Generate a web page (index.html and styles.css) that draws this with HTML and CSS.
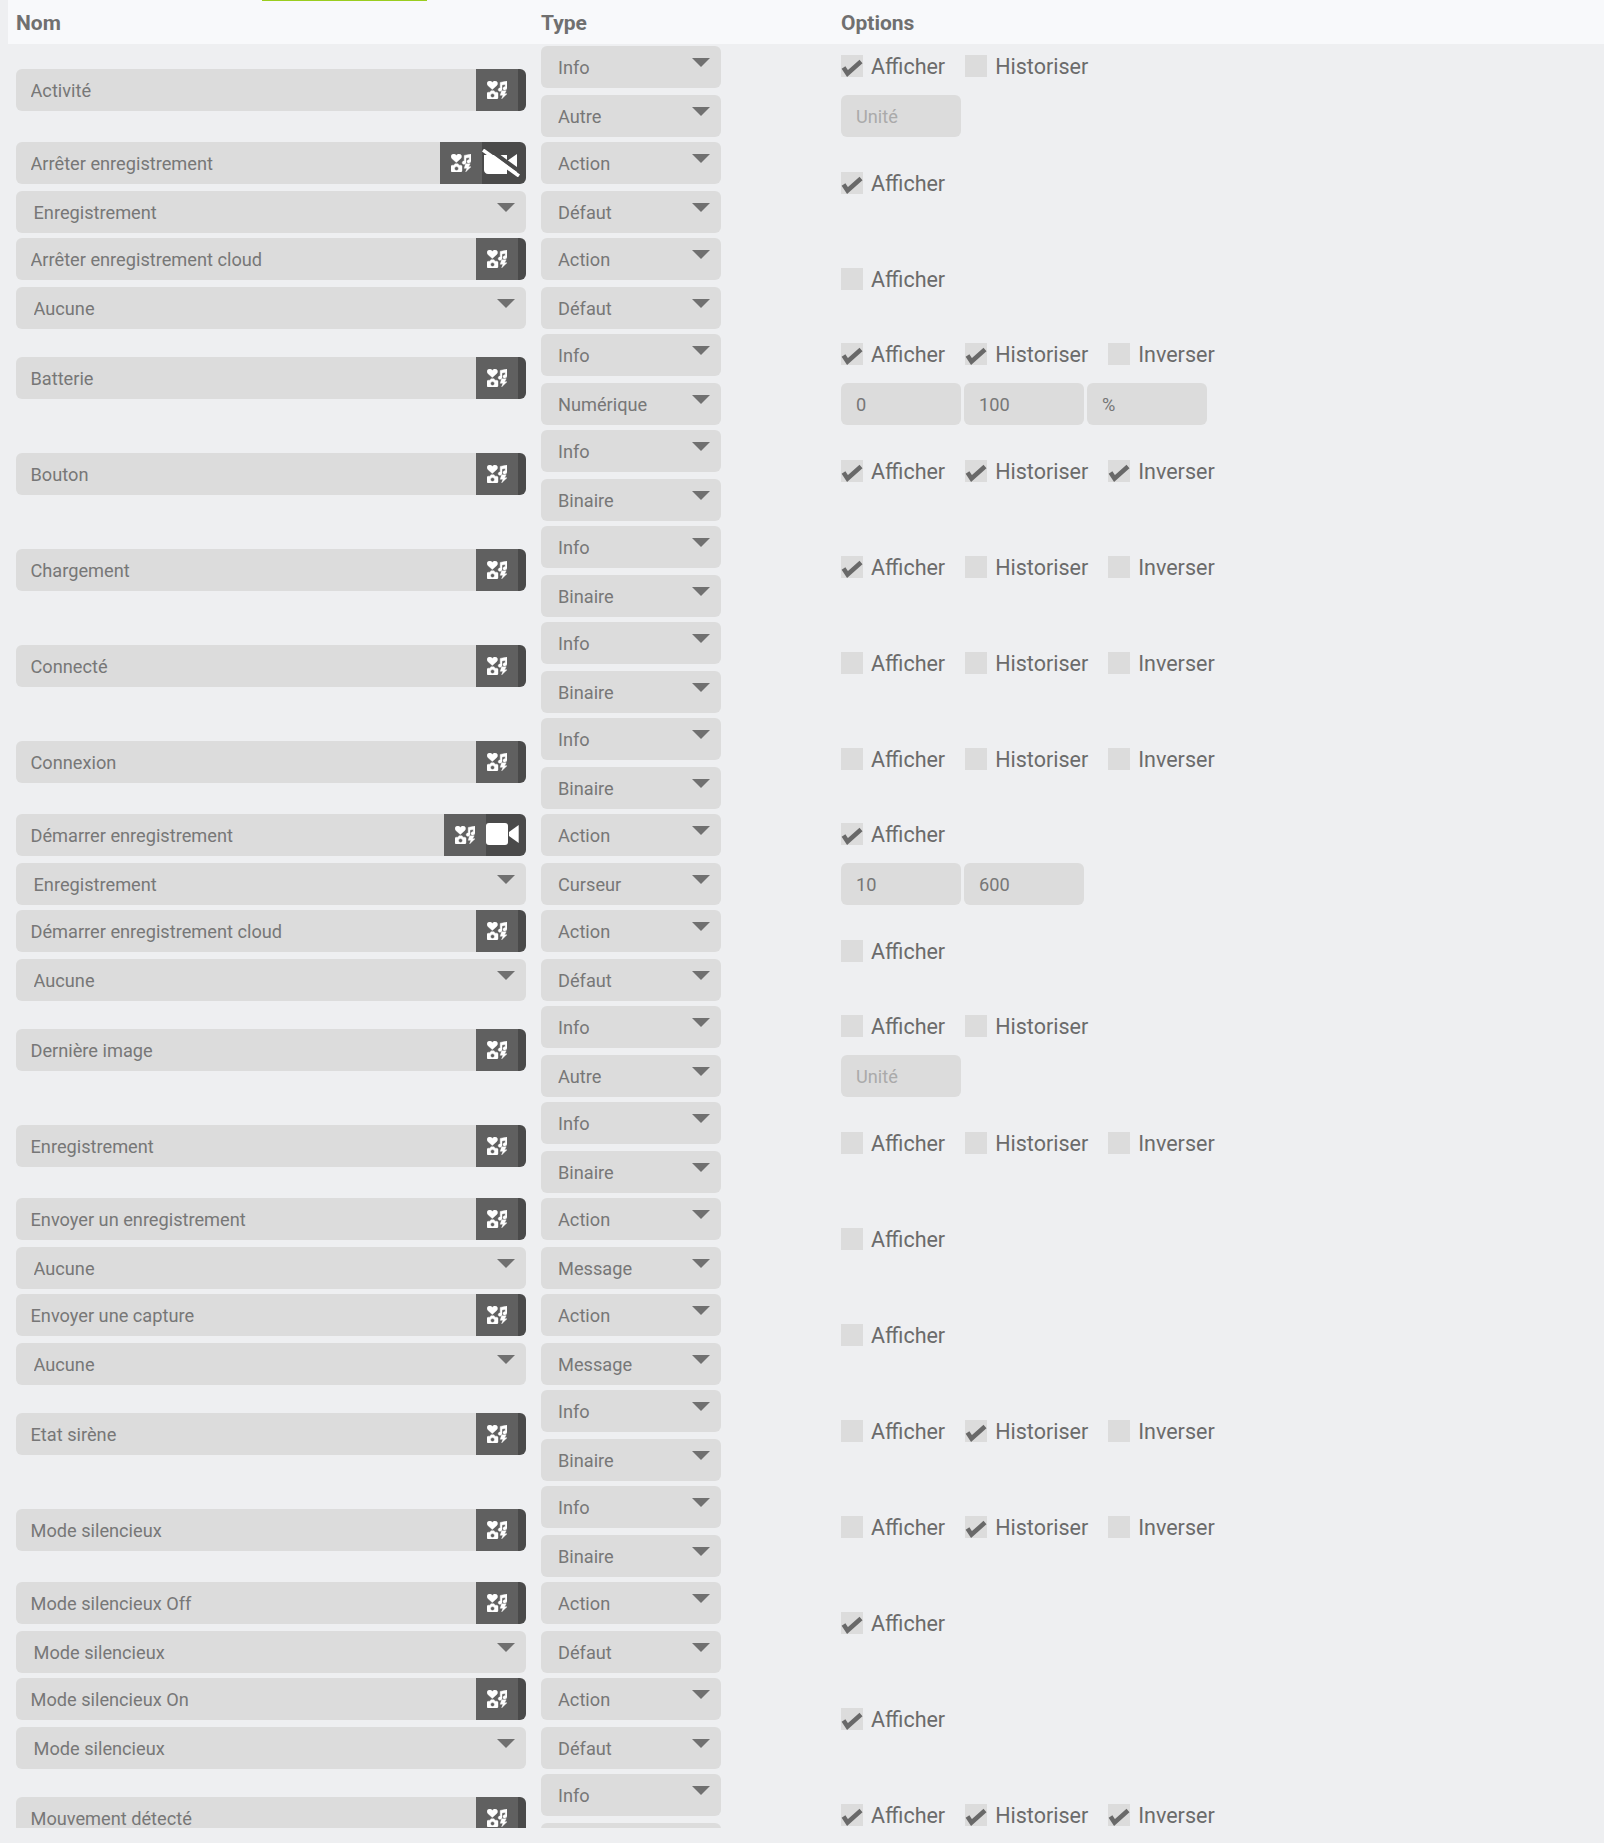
FILE: index.html
```html
<!DOCTYPE html>
<html lang="fr">
<head>
    <meta charset="UTF-8">
    <title>Commandes</title>
    <link rel="stylesheet" href="styles.css">
</head>
<body>

    <svg class="sprites" width="0" height="0">
        <symbol id="icon-generic" viewBox="0 0 20 18">
            <path d="M5.3 8.6 0.8 4.4C-0.7 2.9 0.1 0 2.6 0 3.8 0 4.7 0.6 5.3 1.4 5.9 0.6 6.8 0 8 0 10.5 0 11.3 2.9 9.8 4.4Z"/>
            <path d="M13.2 1.4 20 0V7C20 8.3 18.9 9 17.8 9 16.8 9 16 8.3 16 7.4 16 6.4 16.9 5.7 17.9 5.7L18.2 5.7V3.4L15 4.1V8.4C15 9.6 13.9 10.2 12.9 10.2 11.9 10.2 11.2 9.6 11.2 8.7 11.2 7.8 12 7.1 13 7.1L13.2 7.1Z"/>
            <path fill-rule="evenodd" d="M1.3 11.2H3L3.9 9.8H7.1L8 11.2H9.7C10.4 11.2 11 11.8 11 12.5V16.7C11 17.4 10.4 18 9.7 18H1.3C0.6 18 0 17.4 0 16.7V12.5C0 11.8 0.6 11.2 1.3 11.2ZM5.5 12.6A2 2 0 1 0 5.5 16.6 2 2 0 1 0 5.5 12.6Z"/>
            <path d="M14.6 9.8H19.2L17.6 12.8H20L14.6 18 15.9 14.3H13.2Z"/>
        </symbol>
        <symbol id="icon-video" viewBox="0 0 33 22">
            <rect x="0" y="0" width="22" height="22" rx="3"/>
            <path d="M23 9 32.7 2V20L23 13Z"/>
        </symbol>
        <symbol id="icon-video-off" viewBox="0 0 38 28">
            <path d="M2 6H25V25H6C3.8 25 2 23.2 2 21Z"/>
            <path d="M25 12 35 5V25L25 18Z"/>
            <path class="slash-bg" d="M3 -3 41 25"/>
            <path class="slash" d="M1 1 37 27"/>
        </symbol>
    </svg>

    <div class="panel">
        <div class="table-head">
            <div>Nom</div>
            <div>Type</div>
            <div>Options</div>
        </div>

        <!-- Commandes info : nom centre sur les deux selects -->
        <div class="cmd">
            <div class="cmd-name">
                <div class="name-group"><input type="text" value="Activité"><button class="btn-generic"><svg><use href="#icon-generic"/></svg></button><button class="btn-end"></button></div>
            </div>
            <div class="cmd-type">
                <div class="select-wrap"><select><option>Info</option></select></div>
                <div class="select-wrap"><select><option>Autre</option></select></div>
            </div>
            <div class="cmd-options">
                <div class="checks">
                    <label><input type="checkbox" checked>Afficher</label>
                    <label><input type="checkbox">Historiser</label>
                </div>
                <div class="fields"><input type="text" placeholder="Unité"></div>
            </div>
        </div>

        <div class="cmd">
            <div class="cmd-name">
                <div class="name-group"><input type="text" value="Arrêter enregistrement"><button class="btn-generic"><svg><use href="#icon-generic"/></svg></button><button class="btn-icon off"><svg><use href="#icon-video-off"/></svg></button></div>
                <div class="select-wrap select-link"><select><option>Enregistrement</option></select></div>
            </div>
            <div class="cmd-type">
                <div class="select-wrap"><select><option>Action</option></select></div>
                <div class="select-wrap"><select><option>Défaut</option></select></div>
            </div>
            <div class="cmd-options">
                <div class="checks">
                    <label><input type="checkbox" checked>Afficher</label>
                </div>
            </div>
        </div>

        <div class="cmd">
            <div class="cmd-name">
                <div class="name-group"><input type="text" value="Arrêter enregistrement cloud"><button class="btn-generic"><svg><use href="#icon-generic"/></svg></button><button class="btn-end"></button></div>
                <div class="select-wrap select-link"><select><option>Aucune</option></select></div>
            </div>
            <div class="cmd-type">
                <div class="select-wrap"><select><option>Action</option></select></div>
                <div class="select-wrap"><select><option>Défaut</option></select></div>
            </div>
            <div class="cmd-options">
                <div class="checks">
                    <label><input type="checkbox">Afficher</label>
                </div>
            </div>
        </div>

        <div class="cmd">
            <div class="cmd-name">
                <div class="name-group"><input type="text" value="Batterie"><button class="btn-generic"><svg><use href="#icon-generic"/></svg></button><button class="btn-end"></button></div>
            </div>
            <div class="cmd-type">
                <div class="select-wrap"><select><option>Info</option></select></div>
                <div class="select-wrap"><select><option>Numérique</option></select></div>
            </div>
            <div class="cmd-options">
                <div class="checks">
                    <label><input type="checkbox" checked>Afficher</label>
                    <label><input type="checkbox" checked>Historiser</label>
                    <label><input type="checkbox">Inverser</label>
                </div>
                <div class="fields"><input type="text" value="0"><input type="text" value="100"><input type="text" value="%"></div>
            </div>
        </div>

        <div class="cmd">
            <div class="cmd-name">
                <div class="name-group"><input type="text" value="Bouton"><button class="btn-generic"><svg><use href="#icon-generic"/></svg></button><button class="btn-end"></button></div>
            </div>
            <div class="cmd-type">
                <div class="select-wrap"><select><option>Info</option></select></div>
                <div class="select-wrap"><select><option>Binaire</option></select></div>
            </div>
            <div class="cmd-options">
                <div class="checks">
                    <label><input type="checkbox" checked>Afficher</label>
                    <label><input type="checkbox" checked>Historiser</label>
                    <label><input type="checkbox" checked>Inverser</label>
                </div>
            </div>
        </div>

        <div class="cmd">
            <div class="cmd-name">
                <div class="name-group"><input type="text" value="Chargement"><button class="btn-generic"><svg><use href="#icon-generic"/></svg></button><button class="btn-end"></button></div>
            </div>
            <div class="cmd-type">
                <div class="select-wrap"><select><option>Info</option></select></div>
                <div class="select-wrap"><select><option>Binaire</option></select></div>
            </div>
            <div class="cmd-options">
                <div class="checks">
                    <label><input type="checkbox" checked>Afficher</label>
                    <label><input type="checkbox">Historiser</label>
                    <label><input type="checkbox">Inverser</label>
                </div>
            </div>
        </div>

        <div class="cmd">
            <div class="cmd-name">
                <div class="name-group"><input type="text" value="Connecté"><button class="btn-generic"><svg><use href="#icon-generic"/></svg></button><button class="btn-end"></button></div>
            </div>
            <div class="cmd-type">
                <div class="select-wrap"><select><option>Info</option></select></div>
                <div class="select-wrap"><select><option>Binaire</option></select></div>
            </div>
            <div class="cmd-options">
                <div class="checks">
                    <label><input type="checkbox">Afficher</label>
                    <label><input type="checkbox">Historiser</label>
                    <label><input type="checkbox">Inverser</label>
                </div>
            </div>
        </div>

        <div class="cmd">
            <div class="cmd-name">
                <div class="name-group"><input type="text" value="Connexion"><button class="btn-generic"><svg><use href="#icon-generic"/></svg></button><button class="btn-end"></button></div>
            </div>
            <div class="cmd-type">
                <div class="select-wrap"><select><option>Info</option></select></div>
                <div class="select-wrap"><select><option>Binaire</option></select></div>
            </div>
            <div class="cmd-options">
                <div class="checks">
                    <label><input type="checkbox">Afficher</label>
                    <label><input type="checkbox">Historiser</label>
                    <label><input type="checkbox">Inverser</label>
                </div>
            </div>
        </div>

        <div class="cmd">
            <div class="cmd-name">
                <div class="name-group"><input type="text" value="Démarrer enregistrement"><button class="btn-generic"><svg><use href="#icon-generic"/></svg></button><button class="btn-icon on"><svg><use href="#icon-video"/></svg></button></div>
                <div class="select-wrap select-link"><select><option>Enregistrement</option></select></div>
            </div>
            <div class="cmd-type">
                <div class="select-wrap"><select><option>Action</option></select></div>
                <div class="select-wrap"><select><option>Curseur</option></select></div>
            </div>
            <div class="cmd-options">
                <div class="checks">
                    <label><input type="checkbox" checked>Afficher</label>
                </div>
                <div class="fields"><input type="text" value="10"><input type="text" value="600"></div>
            </div>
        </div>

        <div class="cmd">
            <div class="cmd-name">
                <div class="name-group"><input type="text" value="Démarrer enregistrement cloud"><button class="btn-generic"><svg><use href="#icon-generic"/></svg></button><button class="btn-end"></button></div>
                <div class="select-wrap select-link"><select><option>Aucune</option></select></div>
            </div>
            <div class="cmd-type">
                <div class="select-wrap"><select><option>Action</option></select></div>
                <div class="select-wrap"><select><option>Défaut</option></select></div>
            </div>
            <div class="cmd-options">
                <div class="checks">
                    <label><input type="checkbox">Afficher</label>
                </div>
            </div>
        </div>

        <div class="cmd">
            <div class="cmd-name">
                <div class="name-group"><input type="text" value="Dernière image"><button class="btn-generic"><svg><use href="#icon-generic"/></svg></button><button class="btn-end"></button></div>
            </div>
            <div class="cmd-type">
                <div class="select-wrap"><select><option>Info</option></select></div>
                <div class="select-wrap"><select><option>Autre</option></select></div>
            </div>
            <div class="cmd-options">
                <div class="checks">
                    <label><input type="checkbox">Afficher</label>
                    <label><input type="checkbox">Historiser</label>
                </div>
                <div class="fields"><input type="text" placeholder="Unité"></div>
            </div>
        </div>

        <div class="cmd">
            <div class="cmd-name">
                <div class="name-group"><input type="text" value="Enregistrement"><button class="btn-generic"><svg><use href="#icon-generic"/></svg></button><button class="btn-end"></button></div>
            </div>
            <div class="cmd-type">
                <div class="select-wrap"><select><option>Info</option></select></div>
                <div class="select-wrap"><select><option>Binaire</option></select></div>
            </div>
            <div class="cmd-options">
                <div class="checks">
                    <label><input type="checkbox">Afficher</label>
                    <label><input type="checkbox">Historiser</label>
                    <label><input type="checkbox">Inverser</label>
                </div>
            </div>
        </div>

        <div class="cmd">
            <div class="cmd-name">
                <div class="name-group"><input type="text" value="Envoyer un enregistrement"><button class="btn-generic"><svg><use href="#icon-generic"/></svg></button><button class="btn-end"></button></div>
                <div class="select-wrap select-link"><select><option>Aucune</option></select></div>
            </div>
            <div class="cmd-type">
                <div class="select-wrap"><select><option>Action</option></select></div>
                <div class="select-wrap"><select><option>Message</option></select></div>
            </div>
            <div class="cmd-options">
                <div class="checks">
                    <label><input type="checkbox">Afficher</label>
                </div>
            </div>
        </div>

        <div class="cmd">
            <div class="cmd-name">
                <div class="name-group"><input type="text" value="Envoyer une capture"><button class="btn-generic"><svg><use href="#icon-generic"/></svg></button><button class="btn-end"></button></div>
                <div class="select-wrap select-link"><select><option>Aucune</option></select></div>
            </div>
            <div class="cmd-type">
                <div class="select-wrap"><select><option>Action</option></select></div>
                <div class="select-wrap"><select><option>Message</option></select></div>
            </div>
            <div class="cmd-options">
                <div class="checks">
                    <label><input type="checkbox">Afficher</label>
                </div>
            </div>
        </div>

        <div class="cmd">
            <div class="cmd-name">
                <div class="name-group"><input type="text" value="Etat sirène"><button class="btn-generic"><svg><use href="#icon-generic"/></svg></button><button class="btn-end"></button></div>
            </div>
            <div class="cmd-type">
                <div class="select-wrap"><select><option>Info</option></select></div>
                <div class="select-wrap"><select><option>Binaire</option></select></div>
            </div>
            <div class="cmd-options">
                <div class="checks">
                    <label><input type="checkbox">Afficher</label>
                    <label><input type="checkbox" checked>Historiser</label>
                    <label><input type="checkbox">Inverser</label>
                </div>
            </div>
        </div>

        <div class="cmd">
            <div class="cmd-name">
                <div class="name-group"><input type="text" value="Mode silencieux"><button class="btn-generic"><svg><use href="#icon-generic"/></svg></button><button class="btn-end"></button></div>
            </div>
            <div class="cmd-type">
                <div class="select-wrap"><select><option>Info</option></select></div>
                <div class="select-wrap"><select><option>Binaire</option></select></div>
            </div>
            <div class="cmd-options">
                <div class="checks">
                    <label><input type="checkbox">Afficher</label>
                    <label><input type="checkbox" checked>Historiser</label>
                    <label><input type="checkbox">Inverser</label>
                </div>
            </div>
        </div>

        <div class="cmd">
            <div class="cmd-name">
                <div class="name-group"><input type="text" value="Mode silencieux Off"><button class="btn-generic"><svg><use href="#icon-generic"/></svg></button><button class="btn-end"></button></div>
                <div class="select-wrap select-link"><select><option>Mode silencieux</option></select></div>
            </div>
            <div class="cmd-type">
                <div class="select-wrap"><select><option>Action</option></select></div>
                <div class="select-wrap"><select><option>Défaut</option></select></div>
            </div>
            <div class="cmd-options">
                <div class="checks">
                    <label><input type="checkbox" checked>Afficher</label>
                </div>
            </div>
        </div>

        <div class="cmd">
            <div class="cmd-name">
                <div class="name-group"><input type="text" value="Mode silencieux On"><button class="btn-generic"><svg><use href="#icon-generic"/></svg></button><button class="btn-end"></button></div>
                <div class="select-wrap select-link"><select><option>Mode silencieux</option></select></div>
            </div>
            <div class="cmd-type">
                <div class="select-wrap"><select><option>Action</option></select></div>
                <div class="select-wrap"><select><option>Défaut</option></select></div>
            </div>
            <div class="cmd-options">
                <div class="checks">
                    <label><input type="checkbox" checked>Afficher</label>
                </div>
            </div>
        </div>

        <div class="cmd">
            <div class="cmd-name">
                <div class="name-group"><input type="text" value="Mouvement détecté"><button class="btn-generic"><svg><use href="#icon-generic"/></svg></button><button class="btn-end"></button></div>
            </div>
            <div class="cmd-type">
                <div class="select-wrap"><select><option>Info</option></select></div>
                <div class="select-wrap"><select><option>Binaire</option></select></div>
            </div>
            <div class="cmd-options">
                <div class="checks">
                    <label><input type="checkbox" checked>Afficher</label>
                    <label><input type="checkbox" checked>Historiser</label>
                    <label><input type="checkbox" checked>Inverser</label>
                </div>
            </div>
        </div>
    </div>

</body>
</html>
```

FILE: styles.css
```css
html, body {
    margin: 0;
    height: 100%;
    overflow: hidden;
}

body {
    font-family: Roboto, "Liberation Sans", sans-serif;
    background-color: #eeeff1;
    color: #6f6f6f;
}

.sprites {
    position: absolute;
}

.panel {
    height: 1828px;
    margin-left: 8px;
    overflow: hidden;
}

.table-head, .cmd {
    display: grid;
    grid-template-columns: 510px 180px 1fr;
    column-gap: 15px;
    padding-left: 8px;
}

.table-head {
    position: relative;
    height: 44px;
    box-sizing: border-box;
    padding-top: 2px;
    margin-bottom: 2px;
    align-items: center;
    background-color: #f8f9fb;
    font-size: 21px;
    font-weight: 700;
    color: #707070;
}

/* bord vert de l'onglet actif au dessus */
.table-head::before {
    content: "";
    position: absolute;
    top: 0;
    left: 254px;
    width: 165px;
    height: 1px;
    background-color: #9acd1e;
}

.table-head div:last-child, .cmd-options {
    margin-left: 105px;
}

.cmd {
    height: 91px;
    margin-bottom: 5px;
}

.cmd-name, .cmd-type {
    display: flex;
    flex-direction: column;
    justify-content: center;
    gap: 7px;
}

input[type="text"], select {
    height: 42px;
    box-sizing: border-box;
    border: none;
    border-radius: 6px;
    outline: none;
    background-color: #dcdcdc;
    font-family: inherit;
    font-size: 18.2px;
    color: #777;
}

input::placeholder {
    color: #aaa;
}

.name-group {
    display: flex;
    height: 42px;
}

.name-group:only-child {
    margin-top: -3px;
}

.name-group input[type="text"] {
    flex: 1;
    min-width: 0;
    padding: 0 14.5px;
    border-radius: 6px 0 0 6px;
}

.name-group button {
    height: 42px;
    padding: 0;
    border: none;
    color: #fff;
    fill: currentColor;
}

.btn-generic {
    width: 42px;
    background-color: #606060;
}

.btn-generic svg {
    display: block;
    width: 20px;
    height: 18px;
    margin: 0 auto;
    fill: #fff;
    stroke: #fff;
    stroke-width: 0.4;
}

.btn-end, .btn-icon {
    border-radius: 0 6px 6px 0;
    background-color: #4a4a4a;
}

.btn-end {
    width: 8px;
}

.btn-icon svg {
    display: block;
    fill: #fff;
}

.btn-icon.on {
    width: 40px;
}

.btn-icon.on svg {
    width: 33px;
    height: 22px;
    margin-bottom: 2px;
}

.btn-icon.off {
    width: 44px;
}

.btn-icon.off svg {
    width: 38px;
    height: 28px;
}

.slash {
    stroke: #fff;
    stroke-width: 3.5;
}

.slash-bg {
    stroke: #4a4a4a;
    stroke-width: 4;
}

.select-wrap {
    position: relative;
    height: 42px;
}

.select-wrap::after {
    content: "";
    position: absolute;
    top: 12px;
    right: 11px;
    border-left: 9px solid transparent;
    border-right: 9px solid transparent;
    border-top: 9px solid #707070;
}

.select-wrap select {
    width: 100%;
    padding: 0 17px;
    appearance: none;
}

.select-link select {
    padding: 0 17.5px;
}

.cmd-options {
    display: flex;
    flex-direction: column;
    justify-content: center;
}

.checks {
    display: flex;
    height: 40px;
    margin-bottom: 9px;
    align-items: center;
    font-size: 21.5px;
    color: #6b6b6b;
}

.checks label {
    display: flex;
    align-items: center;
    margin-right: 20px;
}

.checks input {
    width: 22px;
    height: 22px;
    margin: 0 8px 0 0;
    appearance: none;
    background-color: #dcdcdc;
}

.checks input:checked {
    background-image: url("data:image/svg+xml,%3Csvg xmlns='http://www.w3.org/2000/svg' width='22' height='22'%3E%3Cpath d='M2.5 12.5 6.5 18.5 20 6.5' fill='none' stroke='%23696969' stroke-width='4.5'/%3E%3C/svg%3E");
}

.fields {
    display: flex;
    gap: 3px;
}

.fields input[type="text"] {
    width: 120px;
    padding: 0 15px;
}
```
